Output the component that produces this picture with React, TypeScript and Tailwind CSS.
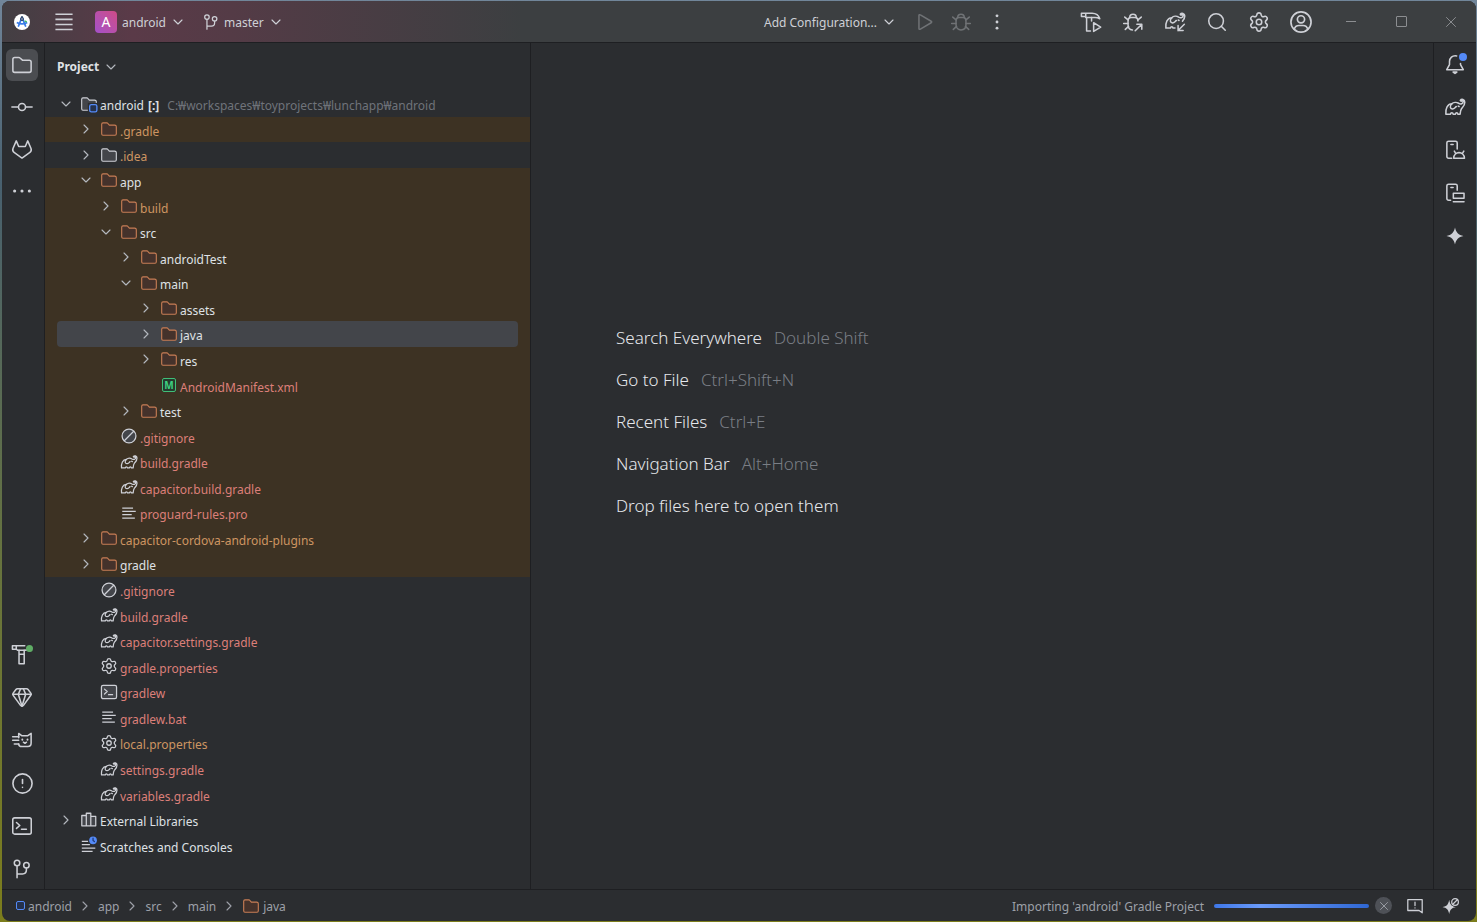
import React, { useState } from 'react';
import { ChevronDown, ChevronRight, CircleAlert, Gem, Search, Settings, X } from 'lucide-react';
import clsx from 'clsx';

// --- Icons ---

interface IconProps {
  className?: string;
  children?: React.ReactNode;
}

const Icon: React.FC<IconProps> = ({ className = 'size-[22px]', children }) => (
  <svg
    viewBox="0 0 20 20"
    fill="none"
    stroke="currentColor"
    strokeWidth={1.4}
    strokeLinecap="round"
    strokeLinejoin="round"
    className={clsx('shrink-0', className)}
    aria-hidden="true"
  >
    {children}
  </svg>
);

const FolderShape = 'M8.1 4.35L8.25 4.5H13C13.83 4.5 14.5 5.17 14.5 6V12.13C14.5 12.95 13.93 13.5 13.37 13.5H2.63C2.07 13.5 1.5 12.95 1.5 12.13V3.87C1.5 3.05 2.07 2.5 2.63 2.5H6.12C6.26 2.5 6.39 2.56 6.48 2.65L8.1 4.35Z';

const SmallFolder = ({ fill, stroke }: { fill: string; stroke: string }) => (
  <svg viewBox="0 0 16 16" className="size-[18px] shrink-0" aria-hidden="true">
    <path d={FolderShape} fill={fill} stroke={stroke} />
  </svg>
);

const StudioLogo = () => (
  <svg viewBox="0 0 20 20" className="size-5 shrink-0" aria-hidden="true">
    <circle cx="10" cy="10" r="8" fill="#fff" />
    <path d="M9.5 6.5L6.5 14M10.5 6.5L13.5 14" stroke="#3b7de8" strokeWidth="1.8" strokeLinecap="round" />
    <path d="M4.8 10.4Q10 13.4 15.2 10.4" stroke="#3b7de8" strokeWidth="1.7" fill="none" />
    <path d="M12.6 9L14.8 9.8" stroke="#3dbb6c" strokeWidth="1.4" />
    <circle cx="10" cy="7" r="1.9" fill="#203a63" />
    <circle cx="10" cy="7" r=".7" fill="#fff" />
    <path d="M10 4V5.5" stroke="#203a63" strokeWidth="1.4" />
  </svg>
);

const BranchIcon = ({ className }: IconProps) => (
  <Icon className={className}>
    <circle cx="5.5" cy="4.5" r="2.5" />
    <circle cx="14" cy="6.5" r="2.5" />
    <path d="M5.5 7V18M5.5 14.5H10.5C12.8 14.5 14 13 14 11V9" />
  </Icon>
);

const elephantBody = 'M1.7 16.5C1.2 11.5 3 7.4 7 7.1C8.6 5.6 11.5 5.4 13.3 6.6C15.3 7.8 17.3 7 17.4 5.2C17.4 4.2 16.2 4 15.6 4.7L14.8 4C15.8 2.5 18.9 2.8 18.9 5.6C18.9 8.8 17.1 10 16 11.3C15 12.6 14.8 14.5 14.6 16.5H12.6C12.4 14.9 10.6 14.9 10.4 16.5H8.3C8.1 14.9 6.1 14.9 5.9 16.5H1.7Z';
const elephantEar = 'M7.2 7.2C4.4 9.3 6 12 8 11.8C10 11.6 10.4 10 11.2 9.6M12.9 9.2L13.7 9.6';

const ElephantIcon = ({ className }: IconProps) => (
  <Icon className={className}>
    <path d={elephantBody} />
    <path d={elephantEar} />
  </Icon>
);

const GradleSyncIcon = () => (
  <Icon>
    <path d="M10 15.5H8.2C8 14 6.1 14 5.9 15.5H1.7C1.2 10.5 3 6.4 7 6.1C8.6 4.6 11.5 4.4 13.3 5.6C15.3 6.8 17.3 6 17.4 4.2C17.4 3.2 16.2 3 15.6 3.7L14.8 3C15.8 1.5 18.9 1.8 18.9 4.6C18.9 7 17.8 8.2 16.8 9.2" />
    <path d="M7.2 6.2C4.4 8.3 6 11 8 10.8C10 10.6 10.4 9 11.2 8.6M12.9 8.2L13.7 8.6" />
    <path d="M18.5 12L12.8 17.8M12.8 13.2V17.8H17.4" />
  </Icon>
);

const HammerRunIcon = () => (
  <Icon>
    <path d="M1.3 2H11C14.6 2 17 3.8 18 7C15.8 5.8 14 5.6 12 6H5.2V5H1.3V2ZM5.2 2V5" />
    <path d="M6 6V18.2H9.5M10.5 6V9" />
    <path d="M12.4 10.6L18.8 14.6L12.4 18.6Z" />
  </Icon>
);

const HammerIcon = () => (
  <Icon>
    <path d="M12.5 2.5H1.3V5.6H4.8L6 6.6H12.5C14 6 15.4 6.2 17 7.4M4.8 2.5V5.6" />
    <path d="M7.3 6.6V18.8H12V6.6M7.3 10.3H12" />
  </Icon>
);

const BugIcon = ({ arrow = false }: { arrow?: boolean }) => (
  <Icon>
    <path d="M7 6C7 2 13 2 13 6" />
    <path d={arrow ? 'M14.5 9C14.5 7 13.5 6 12 6H8C6.5 6 5.5 7 5.5 9V12.5C5.5 15.5 7.3 17 9.5 17.2' : 'M8 6H12C13.5 6 14.5 7 14.5 9V12.5C14.5 15.5 12.5 17.2 10 17.2C7.5 17.2 5.5 15.5 5.5 12.5V9C5.5 7 6.5 6 8 6Z'} />
    <path d="M5.5 8L2.5 5.5M5.5 11.3H1.5M6 14L3 16.7M14.5 8L17.5 5.5" />
    {arrow ? <path d="M12 18L18 12M13.5 12H18V16.5" /> : <path d="M14.5 11.3H18.5M14 14L17 16.7" />}
  </Icon>
);

const AccountIcon = () => (
  <Icon className="size-6">
    <circle cx="10" cy="10" r="8.4" />
    <circle cx="10" cy="7.8" r="3" />
    <path d="M4.4 16C5 13.6 6.7 12.9 8.3 12.9H11.7C13.3 12.9 15 13.6 15.6 16" />
  </Icon>
);

const FoxIcon = () => (
  <Icon>
    <path d="M4.8 2.6L7 7.7H13L15.2 2.6L18.2 9.6C18.8 11.1 18.2 12.3 17.2 13.1L10 18.2L2.8 13.1C1.8 12.3 1.2 11.1 1.8 9.6Z" />
  </Icon>
);

const CatIcon = () => (
  <Icon>
    <path d="M7 8V4L10 6.2H15L18.3 4V12.8C18.3 15 17.2 16 15.3 16H10C8 16 7 15 7 13.6" />
    <path d="M1.5 7H7M1.5 10.3H7M3 13.6H7M11.3 12L12.7 13L14.1 12" />
    <path d="M10.3 9.4V9.8M15 9.4V9.8" strokeWidth="1.7" />
  </Icon>
);

const TerminalIcon = ({ className, fill = 'none' }: IconProps & { fill?: string }) => (
  <Icon className={className}>
    <rect x="1.6" y="2.6" width="16.8" height="14.8" rx="1.8" fill={fill} />
    <path d="M5 6.8L8 9.5L5 12.2M9.5 13H14" />
  </Icon>
);

const BellIcon = () => (
  <Icon>
    <path d="M11.5 2.7C7.5 2 5 4.6 5 7.8V10.5L2.5 15.2H17.5L15 10.5V9.5" />
    <path d="M8.3 17.3H11.7L10 18.5Z" fill="currentColor" />
  </Icon>
);

const DeviceManagerIcon = () => (
  <Icon>
    <path d="M7 17.5H4.2C3.2 17.5 2.6 16.9 2.6 16V3.5C2.6 2.6 3.2 2 4.2 2H10.5C11.5 2 12 2.6 12 3.5V9M6.3 5H8.3" />
    <path d="M8.8 17.5C9 10.7 18.3 10.7 18.6 17.5ZM10.5 12.8L9.4 11M16.9 12.8L18 11" />
  </Icon>
);

const RunningDevicesIcon = () => (
  <Icon>
    <path d="M6 16.5H4.2C3.2 16.5 2.6 15.9 2.6 15V3.5C2.6 2.6 3.2 2 4.2 2H10.5C11.5 2 12 2.6 12 3.5V7.5M6.3 5H8.3" />
    <path d="M8.5 10.2H18.2V14.8H8.5ZM8.5 18H18.2" />
  </Icon>
);

const sparkle = 'M10 1.5C11 6.5 13.5 9 18.5 10C13.5 11 11 13.5 10 18.5C9 13.5 6.5 11 1.5 10C6.5 9 9 6.5 10 1.5Z';

// --- Project tree ---

type IconKind = 'module' | 'folder' | 'excluded' | 'manifest' | 'ignored' | 'gradle' | 'text' | 'gear' | 'shell' | 'libs' | 'scratch';

const TreeIcon = ({ kind }: { kind: IconKind }) => {
  switch (kind) {
    case 'module':
      return (
        <svg viewBox="0 0 16 16" className="size-[18px] shrink-0" aria-hidden="true">
          <path d={FolderShape} fill="#43454a" stroke="#ced0d6" />
          <rect x="7" y="7" width="9" height="9" fill="#2b2d30" />
          <rect x="8.6" y="8.6" width="6.4" height="6.4" rx="1.5" fill="#25324d" stroke="#548af7" strokeWidth="1.2" />
        </svg>
      );
    case 'folder':
      return <SmallFolder fill="#43454a" stroke="#ced0d6" />;
    case 'excluded':
      return <SmallFolder fill="#45322b" stroke="#c77d55" />;
    case 'manifest':
      return (
        <span className="flex w-[18px] shrink-0 justify-center">
          <span className="flex size-[14px] items-center justify-center rounded-xs border border-[#3fbf78] bg-[#253b2e] text-[10px] leading-none font-bold text-[#3fd080]">M</span>
        </span>
      );
    case 'ignored':
      return (
        <Icon className="size-[18px]">
          <circle cx="10" cy="10" r="7.7" fill="#43454a" />
          <path d="M4.8 15.2L15.2 4.8" />
        </Icon>
      );
    case 'gradle':
      return <ElephantIcon className="size-[18px]" />;
    case 'text':
      return (
        <Icon className="size-[18px]">
          <path d="M2.5 4.5H14.5M2.5 8.2H17.5M2.5 11.9H13M2.5 15.6H16.5" strokeLinecap="butt" />
        </Icon>
      );
    case 'gear':
      return <Settings className="size-[18px] shrink-0" strokeWidth={1.7} />;
    case 'shell':
      return <TerminalIcon className="size-[18px]" fill="#43454a" />;
    case 'libs':
      return (
        <Icon className="size-[18px]">
          <path d="M2 5H7V16.5H2ZM7 2.5H12V16.5H7ZM12 6H17.5V16.5H12Z" fill="#43454a" />
        </Icon>
      );
    case 'scratch':
      return (
        <Icon className="size-[18px]">
          <path d="M2 6H9M2 9.7H11M2 13.4H17M2 17H14" strokeLinecap="butt" />
          <circle cx="14.5" cy="4.8" r="4.3" fill="#548af7" stroke="none" />
          <path d="M14.5 2.5V5L16 6.2" stroke="#1e3a7a" />
        </Icon>
      );
  }
};

interface TreeNode {
  label: string;
  depth: number;
  icon: IconKind;
  arrow?: 'open' | 'closed';
  tone?: 'ignored' | 'unversioned';
  shaded?: boolean;
}

const tree: TreeNode[] = [
  { label: 'android', depth: 0, icon: 'module', arrow: 'open' },
  { label: '.gradle', depth: 1, icon: 'excluded', arrow: 'closed', tone: 'ignored', shaded: true },
  { label: '.idea', depth: 1, icon: 'folder', arrow: 'closed', tone: 'ignored' },
  { label: 'app', depth: 1, icon: 'excluded', arrow: 'open', shaded: true },
  { label: 'build', depth: 2, icon: 'excluded', arrow: 'closed', tone: 'ignored', shaded: true },
  { label: 'src', depth: 2, icon: 'excluded', arrow: 'open', shaded: true },
  { label: 'androidTest', depth: 3, icon: 'excluded', arrow: 'closed', shaded: true },
  { label: 'main', depth: 3, icon: 'excluded', arrow: 'open', shaded: true },
  { label: 'assets', depth: 4, icon: 'excluded', arrow: 'closed', shaded: true },
  { label: 'java', depth: 4, icon: 'excluded', arrow: 'closed', shaded: true },
  { label: 'res', depth: 4, icon: 'excluded', arrow: 'closed', shaded: true },
  { label: 'AndroidManifest.xml', depth: 4, icon: 'manifest', tone: 'unversioned', shaded: true },
  { label: 'test', depth: 3, icon: 'excluded', arrow: 'closed', shaded: true },
  { label: '.gitignore', depth: 2, icon: 'ignored', tone: 'unversioned', shaded: true },
  { label: 'build.gradle', depth: 2, icon: 'gradle', tone: 'unversioned', shaded: true },
  { label: 'capacitor.build.gradle', depth: 2, icon: 'gradle', tone: 'unversioned', shaded: true },
  { label: 'proguard-rules.pro', depth: 2, icon: 'text', tone: 'unversioned', shaded: true },
  { label: 'capacitor-cordova-android-plugins', depth: 1, icon: 'excluded', arrow: 'closed', tone: 'ignored', shaded: true },
  { label: 'gradle', depth: 1, icon: 'excluded', arrow: 'closed', shaded: true },
  { label: '.gitignore', depth: 1, icon: 'ignored', tone: 'unversioned' },
  { label: 'build.gradle', depth: 1, icon: 'gradle', tone: 'unversioned' },
  { label: 'capacitor.settings.gradle', depth: 1, icon: 'gradle', tone: 'unversioned' },
  { label: 'gradle.properties', depth: 1, icon: 'gear', tone: 'unversioned' },
  { label: 'gradlew', depth: 1, icon: 'shell', tone: 'unversioned' },
  { label: 'gradlew.bat', depth: 1, icon: 'text', tone: 'unversioned' },
  { label: 'local.properties', depth: 1, icon: 'gear', tone: 'ignored' },
  { label: 'settings.gradle', depth: 1, icon: 'gradle', tone: 'unversioned' },
  { label: 'variables.gradle', depth: 1, icon: 'gradle', tone: 'unversioned' },
  { label: 'External Libraries', depth: 0, icon: 'libs', arrow: 'closed' },
  { label: 'Scratches and Consoles', depth: 0, icon: 'scratch' },
];

const ProjectPanel = () => {
  const [selected, setSelected] = useState(9);

  return (
    <section className="flex w-[486px] shrink-0 flex-col overflow-hidden border-r border-[#1e1f22]">
      <button className="flex h-12 shrink-0 items-center gap-1 pl-3 font-bold text-[#dfe1e5]">
        Project
        <ChevronDown className="size-4 text-[#b4b8bf]" strokeWidth={1.7} />
      </button>
      <ul role="tree" aria-label="Project" className="grid h-[767px] shrink-0 auto-rows-fr">
        {tree.map((node, i) => (
          <li
            key={i}
            role="treeitem"
            aria-selected={i === selected}
            aria-expanded={node.arrow && node.arrow === 'open'}
            onClick={() => setSelected(i)}
            className={clsx('grid min-h-0 px-3', node.shaded && 'bg-[#3d3223]')}
          >
            <div
              className={clsx('flex min-h-0 items-center rounded-sm', i === selected && 'bg-[#43454a]')}
              style={{ paddingLeft: node.depth * 20 }}
            >
              <span className="mr-[5px] flex w-[18px] shrink-0 justify-center text-[#b4b8bf]">
                {node.arrow === 'open' && <ChevronDown className="size-4" strokeWidth={1.7} />}
                {node.arrow === 'closed' && <ChevronRight className="size-4" strokeWidth={1.7} />}
              </span>
              <TreeIcon kind={node.icon} />
              <span
                className={clsx(
                  'ml-0.5 pt-[5px] whitespace-nowrap',
                  !node.tone && 'text-[#dfe1e5]',
                  node.tone === 'ignored' && 'text-[#cd9562]',
                  node.tone === 'unversioned' && 'text-[#dc7f79]',
                )}
              >
                {node.label}
                {i === 0 && (
                  <>
                    <b className="ml-1">[:]</b>
                    <span className="ml-2 text-[#6f737a]">C:₩workspaces₩toyprojects₩lunchapp₩android</span>
                  </>
                )}
              </span>
            </div>
          </li>
        ))}
      </ul>
    </section>
  );
};

// --- Bars ---

interface BarButtonProps {
  label: string;
  active?: boolean;
  children: React.ReactNode;
}

const BarButton: React.FC<BarButtonProps> = ({ label, active, children }) => (
  <button
    aria-label={label}
    className={clsx('relative flex size-8 shrink-0 items-center justify-center rounded-md', active && 'bg-[#4b4d51]')}
  >
    {children}
  </button>
);

const TitleBar = () => (
  <header className="flex h-[42px] shrink-0 items-center border-b border-[#1e1f22] bg-[#3c3f41] bg-[linear-gradient(to_right,#433f43,#5a3a48_130px,#543b46_230px,#3c3f41_520px)] pl-2.5">
    <StudioLogo />
    <button aria-label="Main menu" className="ml-[21px]">
      <Icon>
        <path d="M2.2 3H17.8M2.2 7.6H17.8M2.2 12.2H17.8M2.2 16.8H17.8" strokeLinecap="butt" />
      </Icon>
    </button>
    <button className="ml-5 flex items-center gap-1">
      <span className="mr-px flex size-[22px] items-center justify-center rounded-sm bg-linear-to-tr from-[#a44fc9] to-[#cf4a86] text-sm text-white">A</span>
      <span className="pt-[3px]">android</span>
      <ChevronDown className="size-4" strokeWidth={1.7} />
    </button>
    <button className="ml-4 flex items-center gap-1">
      <BranchIcon className="size-[18px]" />
      <span className="pt-[3px]">master</span>
      <ChevronDown className="size-4" strokeWidth={1.7} />
    </button>
    <div className="ml-auto flex items-center">
      <button className="mr-3 flex items-center gap-1">
        <span className="pt-[3px]">Add Configuration...</span>
        <ChevronDown className="size-4" strokeWidth={1.7} />
      </button>
      <div className="mr-[62px] flex gap-1 text-[#6f7275]">
        <BarButton label="Run">
          <Icon>
            <path d="M4.5 4.2V15.8C4.5 16.5 5.2 16.9 5.8 16.5L15.6 10.7C16.2 10.4 16.2 9.6 15.6 9.3L5.8 3.5C5.2 3.1 4.5 3.5 4.5 4.2Z" />
          </Icon>
        </BarButton>
        <BarButton label="Debug"><BugIcon /></BarButton>
        <BarButton label="More actions">
          <Icon className="size-[22px] text-[#ced0d6]">
            <g fill="currentColor" stroke="none">
              <circle cx="10" cy="4.4" r="1.3" />
              <circle cx="10" cy="10" r="1.3" />
              <circle cx="10" cy="15.6" r="1.3" />
            </g>
          </Icon>
        </BarButton>
      </div>
      <div className="mr-[9px] flex gap-2.5">
        <BarButton label="Build"><HammerRunIcon /></BarButton>
        <BarButton label="Attach debugger"><BugIcon arrow /></BarButton>
        <BarButton label="Sync project"><GradleSyncIcon /></BarButton>
        <BarButton label="Search everywhere"><Search className="size-[22px]" strokeWidth={1.7} /></BarButton>
        <BarButton label="Settings"><Settings className="size-[22px]" strokeWidth={1.7} /></BarButton>
        <BarButton label="Account"><AccountIcon /></BarButton>
      </div>
      <div className="flex text-[#8c8e91]">
        <button aria-label="Minimize" className="flex h-8 w-[50px] items-center justify-center">
          <span className="h-px w-2.5 bg-current" />
        </button>
        <button aria-label="Maximize" className="flex h-8 w-[50px] items-center justify-center">
          <span className="size-[11px] rounded-[1px] border border-current" />
        </button>
        <button aria-label="Close" className="flex h-8 w-[50px] items-center justify-center">
          <X className="size-[18px]" strokeWidth={1.3} />
        </button>
      </div>
    </div>
  </header>
);

const LeftRail = () => (
  <nav aria-label="Left tools" className="flex w-[43px] shrink-0 flex-col items-center justify-between border-r border-[#1e1f22] pt-1.5 pr-0.5 pb-1">
    <div className="flex flex-col gap-2.5">
      <BarButton label="Project" active>
        <Icon>
          <path d="M1.7 4.8C1.7 3.9 2.4 3.2 3.3 3.2H7.2C7.6 3.2 7.9 3.3 8.2 3.6L10.4 5.6H16.6C17.5 5.6 18.3 6.4 18.3 7.3V15C18.3 15.9 17.6 16.7 16.6 16.7H3.3C2.4 16.7 1.7 16 1.7 15Z" />
        </Icon>
      </BarButton>
      <BarButton label="Commit">
        <Icon>
          <circle cx="10" cy="10" r="3.2" />
          <path d="M.8 10H6.8M13.2 10H19.2" />
        </Icon>
      </BarButton>
      <BarButton label="Merge requests"><FoxIcon /></BarButton>
      <BarButton label="More tools">
        <Icon>
          <g fill="currentColor" stroke="none">
            <circle cx="3.3" cy="10" r="1.4" />
            <circle cx="10" cy="10" r="1.4" />
            <circle cx="16.7" cy="10" r="1.4" />
          </g>
        </Icon>
      </BarButton>
    </div>
    <div className="flex flex-col gap-[11px]">
      <BarButton label="Build">
        <HammerIcon />
        <span className="absolute top-[7px] right-[5px] size-[7px] rounded-full bg-[#5fad65]" />
      </BarButton>
      <BarButton label="App quality insights"><Gem className="size-[22px]" strokeWidth={1.7} /></BarButton>
      <BarButton label="Logcat"><CatIcon /></BarButton>
      <BarButton label="Problems"><CircleAlert className="size-[23px]" strokeWidth={1.7} /></BarButton>
      <BarButton label="Terminal"><TerminalIcon /></BarButton>
      <BarButton label="Version control"><BranchIcon /></BarButton>
    </div>
  </nav>
);

const RightRail = () => (
  <nav aria-label="Right tools" className="flex w-[43px] shrink-0 flex-col items-center gap-[11px] border-l border-[#1e1f22] pt-[5px]">
    <BarButton label="Notifications">
      <BellIcon />
      <span className="absolute top-[5px] right-1 size-2 rounded-full bg-[#548af7]" />
    </BarButton>
    <BarButton label="Gradle"><ElephantIcon /></BarButton>
    <BarButton label="Device manager"><DeviceManagerIcon /></BarButton>
    <BarButton label="Running devices"><RunningDevicesIcon /></BarButton>
    <BarButton label="Gemini">
      <Icon className="size-[20px]">
        <path d={sparkle} fill="currentColor" stroke="none" />
      </Icon>
    </BarButton>
  </nav>
);

// --- Empty editor ---

const hints = [
  { action: 'Search Everywhere', keys: 'Double Shift' },
  { action: 'Go to File', keys: 'Ctrl+Shift+N' },
  { action: 'Recent Files', keys: 'Ctrl+E' },
  { action: 'Navigation Bar', keys: 'Alt+Home' },
  { action: 'Drop files here to open them' },
];

const EmptyEditor = () => (
  <main className="flex min-w-0 flex-1 flex-col justify-center pb-[89px] pl-[85px]">
    <ul className="flex flex-col gap-[18px] text-[17px] leading-6 font-light">
      {hints.map((h) => (
        <li key={h.action} className="flex gap-3 text-[#e6e8ec]">
          {h.action}
          {h.keys && <span className="text-[#7a7e85]">{h.keys}</span>}
        </li>
      ))}
    </ul>
  </main>
);

const crumbs = ['android', 'app', 'src', 'main', 'java'];

const StatusBar = () => (
  <footer className="flex h-8 shrink-0 items-center border-t border-[#1e1f22] px-3.5 text-[#9da0a8]">
    <nav aria-label="Path" className="flex items-center">
      {crumbs.map((c, i) => (
        <React.Fragment key={c}>
          {i > 0 && <ChevronRight className="mx-[5px] size-4" strokeWidth={1.7} />}
          <a href="#" className="flex items-center gap-[3px]">
            {i === 0 && <span className="size-[9px] rounded-xs border border-[#548af7] bg-[#25324d]" />}
            {c === 'java' && <SmallFolder fill="#45322b" stroke="#c77d55" />}
            <span className="pt-0.5">{c}</span>
          </a>
        </React.Fragment>
      ))}
    </nav>
    <div className="ml-auto flex items-center pr-0.5">
      <span className="pt-0.5">Importing 'android' Gradle Project</span>
      <div
        role="progressbar"
        aria-label="Gradle import"
        className="ml-2.5 h-1 w-[155px] rounded-full bg-linear-to-r from-[#3e77e8] via-[#6b9bfa] via-30% to-[#2f67d3]"
      />
      <button aria-label="Cancel" className="ml-1.5 flex size-[17px] items-center justify-center rounded-full bg-[#4e5157]">
        <X className="size-3.5" strokeWidth={1.6} />
      </button>
      <button aria-label="Feedback" className="ml-3.5 text-[#ced0d6]">
        <Icon className="size-[18px]">
          <path d="M2 3H18V17.5L14.5 15H2ZM10 5.8V9.5M10 12V12.2" />
        </Icon>
      </button>
      <button aria-label="Gemini status" className="ml-[18px] text-[#ced0d6]">
        <Icon className="size-[18px]">
          <path d="M8 3C9 8.4 10.6 10.2 15.5 11.2C10.6 12.2 9 14 8 19C7 14 5.4 12.2 .5 11.2C5.4 10.2 7 8.4 8 3Z" fill="currentColor" stroke="none" />
          <circle cx="14.5" cy="5.5" r="5.2" fill="#2b2d30" stroke="none" />
          <circle cx="14.5" cy="5.5" r="3.7" />
          <path d="M12 8L17 3" />
        </Icon>
      </button>
    </div>
  </footer>
);

export default function App() {
  return (
    <div className="flex min-h-screen bg-[linear-gradient(to_bottom,#71869a,#48606f_20%,#66733f_60%,#7c7d1c)] p-px pl-0.5 font-['Noto_Sans','Noto_Sans_CJK_KR',sans-serif] text-[12px] leading-[18px] text-[#ced0d6]">
      <div className="flex min-w-0 flex-1 flex-col overflow-hidden rounded-lg bg-[#2b2d30]">
        <TitleBar />
        <div className="flex flex-1">
          <LeftRail />
          <ProjectPanel />
          <EmptyEditor />
          <RightRail />
        </div>
        <StatusBar />
      </div>
    </div>
  );
}
